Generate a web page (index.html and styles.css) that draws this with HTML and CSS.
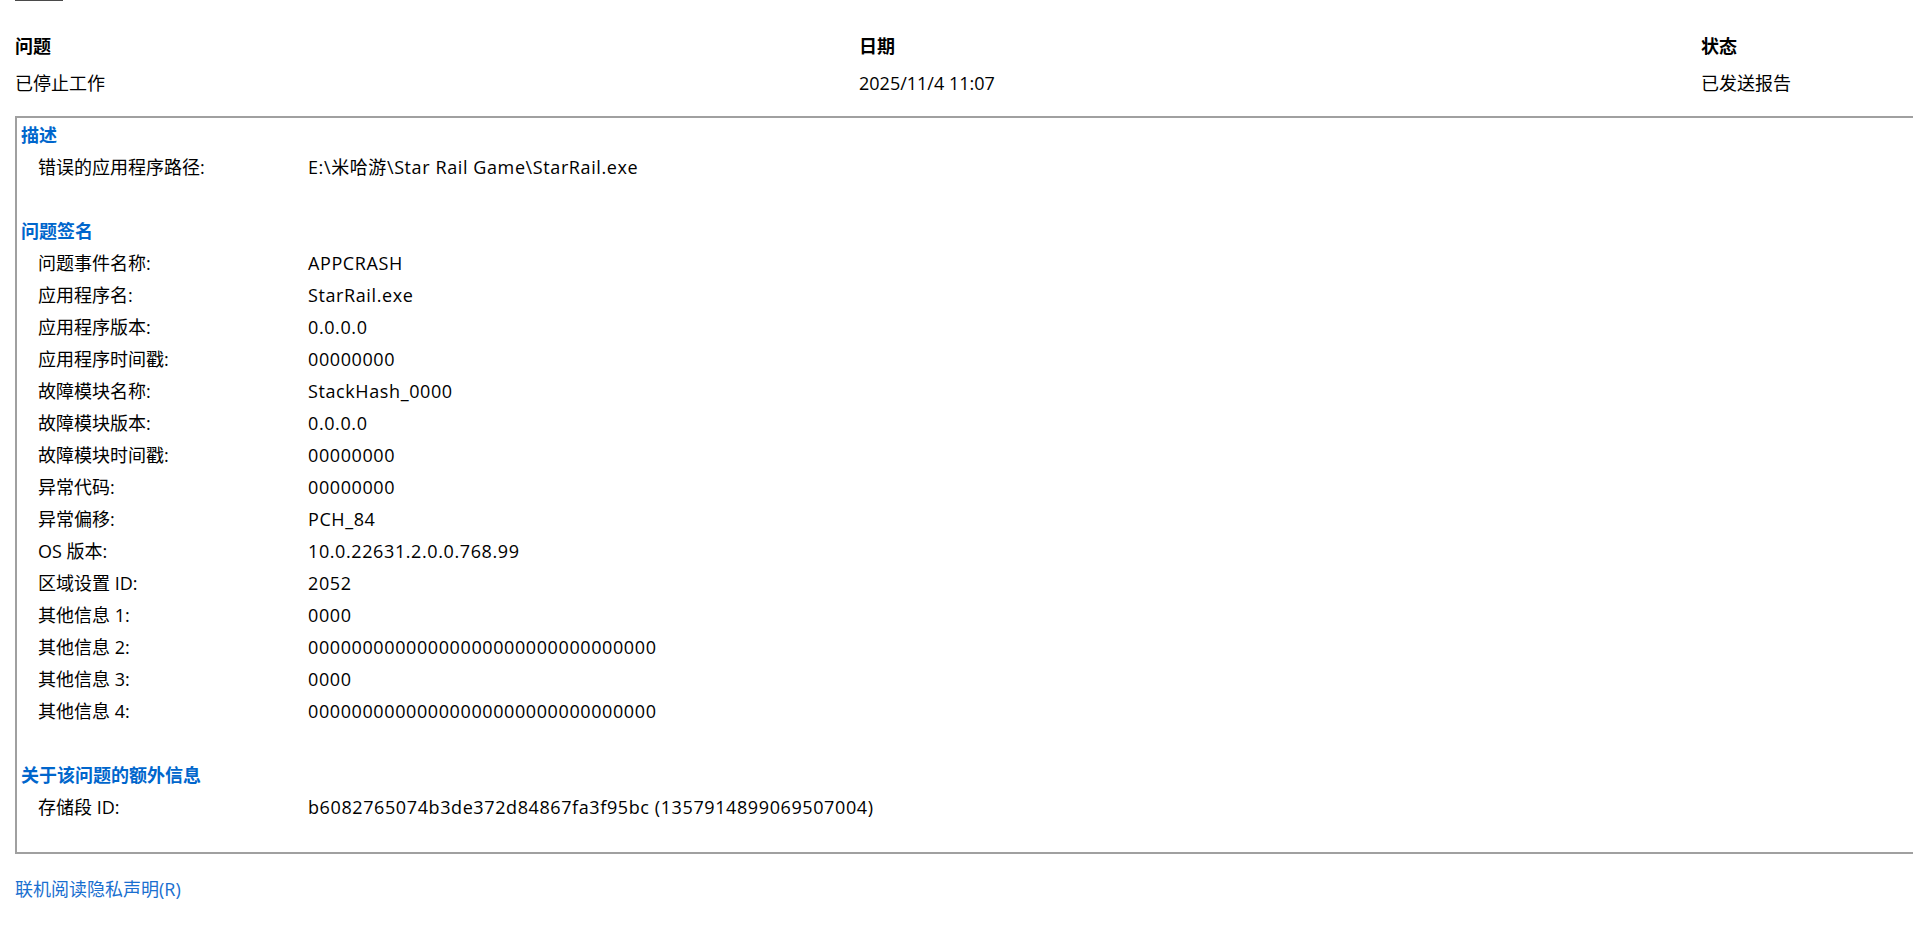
FILE: index.html
```html
<!DOCTYPE html>
<html lang="zh-CN">
<head>
<meta charset="utf-8">
<title>问题详细信息</title>
<link rel="stylesheet" href="styles.css">
</head>
<body>
<div class="page">
  <div class="topline"></div>
  <div class="summary">
    <div class="col">
      <div class="col-head">问题</div>
      <div class="col-val">已停止工作</div>
    </div>
    <div class="col">
      <div class="col-head">日期</div>
      <div class="col-val">2025/11/4 11:07</div>
    </div>
    <div class="col">
      <div class="col-head">状态</div>
      <div class="col-val">已发送报告</div>
    </div>
  </div>

  <div class="details">
    <section class="sect">
      <h2 class="sect-title">描述</h2>
      <div class="row"><span class="lbl">错误的应用程序路径:</span><span class="val">E:\米哈游\Star Rail Game\StarRail.exe</span></div>
    </section>

    <section class="sect">
      <h2 class="sect-title">问题签名</h2>
      <div class="row"><span class="lbl">问题事件名称:</span><span class="val">APPCRASH</span></div>
      <div class="row"><span class="lbl">应用程序名:</span><span class="val">StarRail.exe</span></div>
      <div class="row"><span class="lbl">应用程序版本:</span><span class="val">0.0.0.0</span></div>
      <div class="row"><span class="lbl">应用程序时间戳:</span><span class="val">00000000</span></div>
      <div class="row"><span class="lbl">故障模块名称:</span><span class="val">StackHash_0000</span></div>
      <div class="row"><span class="lbl">故障模块版本:</span><span class="val">0.0.0.0</span></div>
      <div class="row"><span class="lbl">故障模块时间戳:</span><span class="val">00000000</span></div>
      <div class="row"><span class="lbl">异常代码:</span><span class="val">00000000</span></div>
      <div class="row"><span class="lbl">异常偏移:</span><span class="val">PCH_84</span></div>
      <div class="row"><span class="lbl">OS 版本:</span><span class="val">10.0.22631.2.0.0.768.99</span></div>
      <div class="row"><span class="lbl">区域设置 ID:</span><span class="val">2052</span></div>
      <div class="row"><span class="lbl">其他信息 1:</span><span class="val">0000</span></div>
      <div class="row"><span class="lbl">其他信息 2:</span><span class="val">00000000000000000000000000000000</span></div>
      <div class="row"><span class="lbl">其他信息 3:</span><span class="val">0000</span></div>
      <div class="row"><span class="lbl">其他信息 4:</span><span class="val">00000000000000000000000000000000</span></div>
    </section>

    <section class="sect">
      <h2 class="sect-title">关于该问题的额外信息</h2>
      <div class="row"><span class="lbl">存储段 ID:</span><span class="val">b6082765074b3de372d84867fa3f95bc (1357914899069507004)</span></div>
    </section>
  </div>

  <a class="privacy" href="#">联机阅读隐私声明(R)</a>
</div>
</body>
</html>
```

FILE: styles.css
```css
html, body {
  margin: 0;
  padding: 0;
  background: #ffffff;
  overflow: hidden;
}

body {
  font-family: "Open Sans", "Noto Sans CJK SC", sans-serif;
  font-size: 18px;
  color: #000000;
}

.page {
  width: 2560px;
  padding-left: 15px;
}

.topline {
  width: 48px;
  height: 1px;
  background: #4a4a4a;
}

.summary {
  display: grid;
  grid-template-columns: 844px 842px 842px;
  padding-top: 29px;
}

.col {
  display: flex;
  flex-direction: column;
  gap: 5px;
}

.col-head {
  font-weight: 700;
  line-height: 32px;
}

.col-val {
  line-height: 32px;
}

.details {
  margin-top: 17px;
  border: 2px solid #a0a0a0;
  padding: 1px 0 29px 4px;
  width: 2500px;
  display: flex;
  flex-direction: column;
  gap: 32px;
}

.sect {
  display: flex;
  flex-direction: column;
}

.sect-title {
  margin: 0;
  font-size: 18px;
  font-weight: 700;
  line-height: 32px;
  color: #0066cc;
}

.row {
  display: flex;
  line-height: 32px;
  padding-left: 17px;
}

.lbl {
  width: 270px;
  flex: none;
}

.val {
  white-space: nowrap;
  letter-spacing: 0.6px;
}

.privacy {
  display: inline-block;
  margin-top: 19px;
  line-height: 32px;
  color: #1a6fd0;
  text-decoration: none;
}
```
